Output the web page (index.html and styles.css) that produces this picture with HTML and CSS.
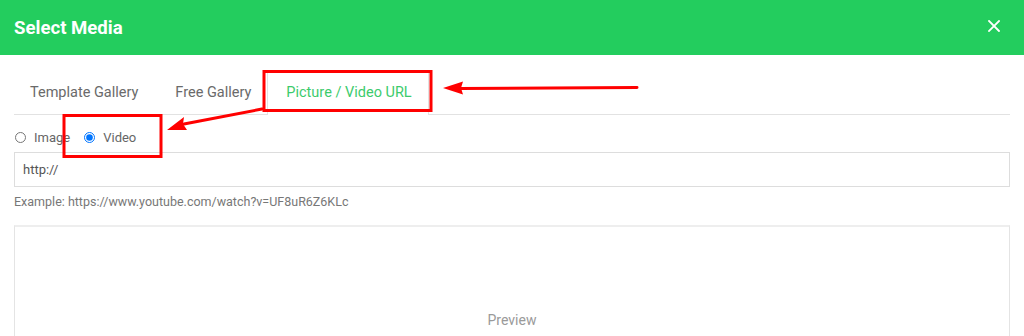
FILE: index.html
```html
<!DOCTYPE html>
<html>
<head>
<meta charset="utf-8">
<link rel="stylesheet" href="styles.css">
</head>
<body>
<div class="modal">
  <header class="modal-header">
    <h1 class="title">Select Media</h1>
    <button class="close" aria-label="Close">
      <svg width="12" height="12" viewBox="0 0 12 12"><path d="M1 1L11 11M11 1L1 11" stroke="#fff" stroke-width="1.8" stroke-linecap="square"/></svg>
    </button>
  </header>
  <div class="modal-body">
    <ul class="tabs">
      <li class="tab">Template Gallery</li>
      <li class="tab">Free Gallery</li>
      <li class="tab active">Picture / Video URL</li>
    </ul>
    <div class="radios">
      <label class="radio"><input type="radio" name="t"><span>Image</span></label>
      <label class="radio"><input type="radio" name="t" checked><span>Video</span></label>
    </div>
    <input class="url" type="text" value="http://">
    <p class="hint">Example: https://www.youtube.com/watch?v=UF8uR6Z6KLc</p>
    <div class="preview"><span>Preview</span></div>
  </div>
  <svg class="annot" width="1024" height="336" viewBox="0 0 1024 336">
    <rect x="264" y="71.5" width="167" height="39" fill="none" stroke="#f00" stroke-width="3"/>
    <rect x="64" y="115.5" width="97" height="41" fill="none" stroke="#f00" stroke-width="3"/>
    <path d="M637 87.5L460 88.5" stroke="#f00" stroke-width="3" stroke-linecap="round"/>
    <path d="M443 88L463 81.5L461 88L463 94.5Z" fill="#f00"/>
    <path d="M262 109L184 124" stroke="#f00" stroke-width="3" stroke-linecap="round"/>
    <path d="M167 130L184 117L183 124L187 130Z" fill="#f00"/>
  </svg>
</div>
</body>
</html>
```

FILE: styles.css
```css
html, body {
  margin: 0;
  padding: 0;
  background: #fff;
}
body {
  font-family: Roboto, "Liberation Sans", Arial, sans-serif;
  width: 1024px;
  height: 336px;
  overflow: hidden;
}
.modal {
  position: relative;
  width: 1024px;
  height: 336px;
  overflow: hidden;
}
.modal-header {
  height: 55px;
  background: #23cd5e;
  display: flex;
  align-items: center;
  justify-content: space-between;
  padding: 0 24px 0 14px;
}
.title {
  margin: 0;
  font-size: 18.6px;
  font-weight: 700;
  color: #fff;
}
.close {
  border: 0;
  background: none;
  padding: 0;
  width: 12px;
  height: 12px;
  display: flex;
  margin-top: -4px;
}
.modal-body {
  padding: 17px 14px 0;
}
.tabs {
  list-style: none;
  margin: 0;
  padding: 0;
  display: flex;
  border-bottom: 1px solid #e2e2e2;
}
.tab {
  padding: 11px 18px 12px 17px;
  font-size: 14.5px;
  line-height: 18px;
  color: #6a6a6a;
  border: 1px solid transparent;
  border-bottom: 0;
  margin-bottom: -1px;
}
.tab:first-child {
  padding-left: 15px;
}
.tab:nth-child(2) {
  padding-right: 15px;
}
.tab.active {
  color: #3ccb6c;
  border-color: #e2e2e2;
  background: #fff;
  padding-bottom: 13px;
  padding-left: 18px;
  padding-right: 16px;
}
.radios {
  display: flex;
  align-items: center;
  box-sizing: border-box;
  height: 37px;
  padding-top: 8px;
  gap: 13px;
}
.radio {
  display: flex;
  align-items: center;
  font-size: 13px;
  color: #666;
}
.radio input {
  margin: 0 8px 0 1px;
  width: 11px;
  height: 11px;
}
.url {
  display: block;
  box-sizing: border-box;
  width: 996px;
  height: 35px;
  border: 1px solid #ddd;
  padding: 0 8px;
  font-family: inherit;
  font-size: 13px;
  color: #555;
  outline: none;
}
.hint {
  margin: 7px 0 0;
  font-size: 12.5px;
  line-height: 16px;
  color: #777;
}
.preview {
  margin-top: 15px;
  height: 140px;
  border: 1px solid #e4e4e4;
  border-top: 2px solid #eee;
  display: flex;
  justify-content: center;
  padding-top: 85px;
  box-sizing: border-box;
}
.preview span {
  font-size: 14px;
  color: #9a9a9a;
}
.annot {
  position: absolute;
  left: 0;
  top: 0;
  pointer-events: none;
}
```
